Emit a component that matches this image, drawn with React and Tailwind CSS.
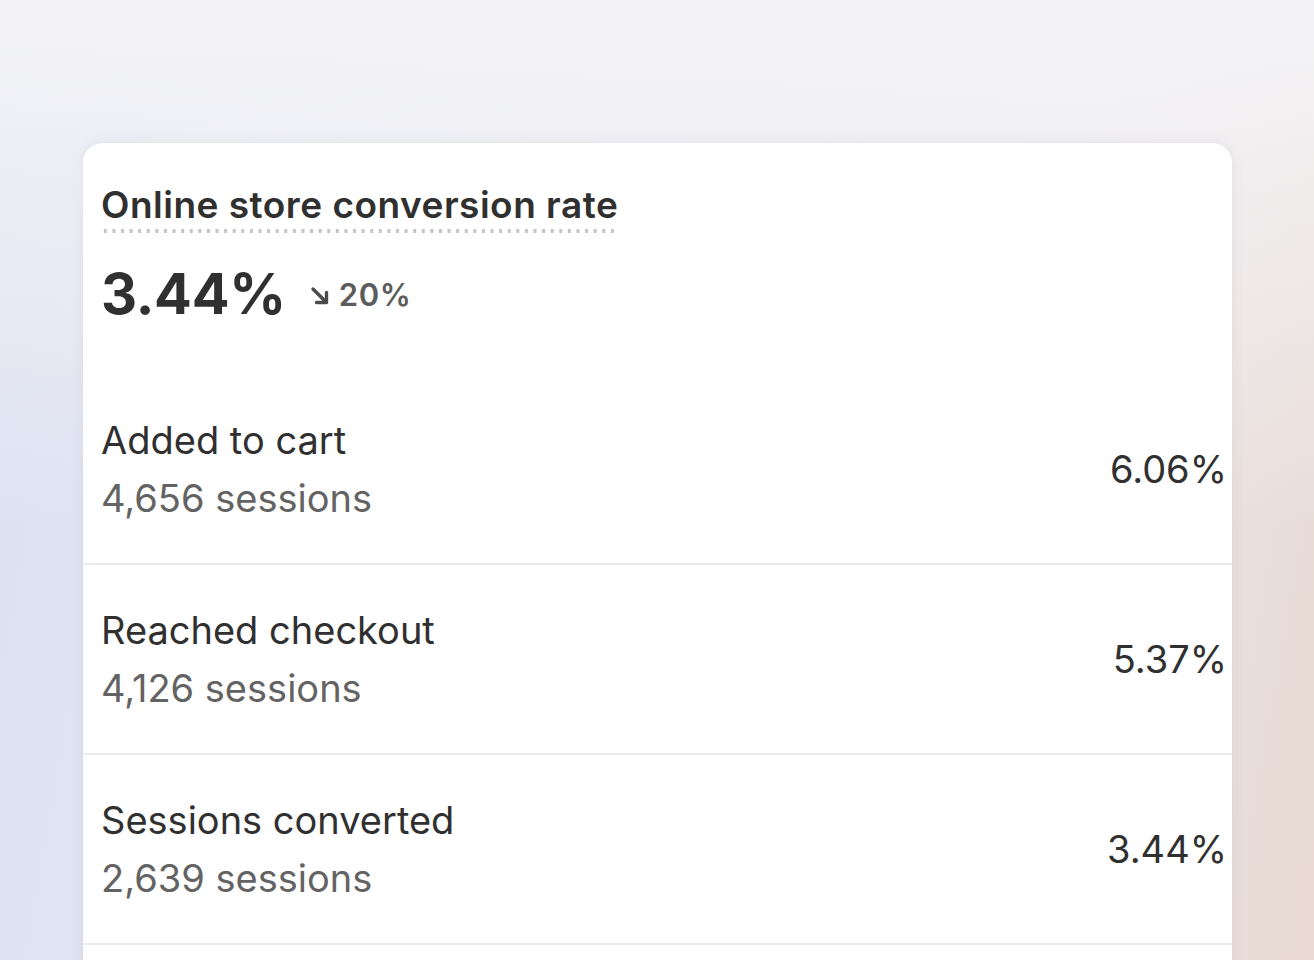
import React from "react";

const rows = [
  { label: "Added to cart", sessions: "4,656 sessions", rate: "6.06%" },
  { label: "Reached checkout", sessions: "4,126 sessions", rate: "5.37%" },
  { label: "Sessions converted", sessions: "2,639 sessions", rate: "3.44%" },
];

const ArrowDownRight = () => (
  <svg width="19" height="19" viewBox="0 0 19 19">
    <path
      d="M3 3l12 12M16.5 6.5v10h-10"
      fill="none"
      stroke="#4a4a4a"
      strokeWidth="3.4"
      strokeLinecap="round"
      strokeLinejoin="round"
    />
  </svg>
);

export default function App() {
  return (
    <div
      className="h-[960px] w-full overflow-hidden pt-[143px] pl-[83px] pr-[82px] bg-[linear-gradient(180deg,#f4f4f6_0%,#f4f4f600_55%),linear-gradient(100deg,#dde0f2_0%,#e7e8f3_45%,#ebe6ea_75%,#e9dad3_100%)]"
      style={{ fontFamily: "Inter, 'Noto Sans', sans-serif" }}
    >
      <div className="bg-white rounded-t-[20px] shadow-[0_0_12px_rgba(120,120,160,0.12)] min-h-[900px]">
        {/* Header */}
        <div className="pl-[18px] pt-[40px]">
          <div className="inline-block">
            <h2 className="text-[37px] leading-[44px] font-semibold text-[#303030] tracking-[0.5px]">
              Online store conversion rate
            </h2>
            <div className="h-[4px] mt-[2px] bg-[radial-gradient(circle,#c4c4c4_1.8px,transparent_2px)] bg-[length:8.6px_4px] bg-repeat-x" />
          </div>
          <div className="flex items-center mt-[29px]">
            <span className="text-[56px] leading-[64px] font-bold text-[#303030] tracking-[-0.3px]">
              3.44%
            </span>
            <span className="flex items-center gap-[10px] ml-[24px] text-[31px] font-semibold text-[#5c5c5c] tracking-[0.6px] mt-[2px]">
              <ArrowDownRight />
              20%
            </span>
          </div>
        </div>

        {/* Funnel rows */}
        <div className="mt-[49px]">
          {rows.map((row) => (
            <div
              key={row.label}
              className="flex items-center justify-between h-[190px] pl-[18px] pr-[5px] border-b-2 border-[#ebebeb]"
            >
              <div className="flex flex-col">
                <span className="text-[38px] leading-[58px] text-[#303030]">{row.label}</span>
                <span className="text-[38px] leading-[58px] text-[#636363]">{row.sessions}</span>
              </div>
              <span className="text-[38px] leading-[58px] text-[#303030]">{row.rate}</span>
            </div>
          ))}
        </div>
      </div>
    </div>
  );
}
